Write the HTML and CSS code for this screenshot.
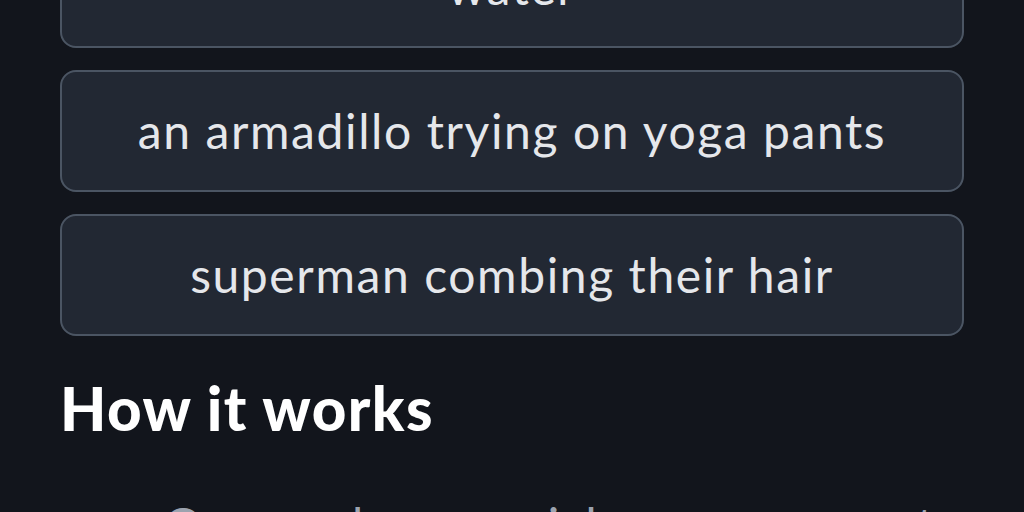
FILE: index.html
```html
<!DOCTYPE html>
<html lang="en">
<head>
<meta charset="utf-8">
<title>Prompts</title>
<link rel="stylesheet" href="styles.css">
</head>
<body>
<main class="page">
  <div class="prompts">
    <button class="prompt">a dolphin jumping out of the<br>water</button>
    <button class="prompt">an armadillo trying on yoga pants</button>
    <button class="prompt">superman combing their hair</button>
  </div>
  <h2 class="heading">How it works</h2>
  <ol class="steps">
    <li>Once a day, we pick a new prompt for everyone to draw.</li>
  </ol>
</main>
</body>
</html>
```

FILE: styles.css
```css
html, body {
  margin: 0;
  padding: 0;
  background: #12151c;
  overflow: hidden;
}

.page {
  padding: 0 60px;
  font-family: "Lato", "Noto Sans", sans-serif;
}

.prompts {
  display: flex;
  flex-direction: column;
  gap: 22px;
  margin-top: -140px;
}

.prompt {
  display: block;
  width: 100%;
  box-sizing: border-box;
  padding: 26px 20px;
  border: 2px solid #4b5563;
  border-radius: 16px;
  background: #222833;
  color: #e5e7eb;
  font-family: inherit;
  font-size: 48px;
  letter-spacing: 1.6px;
  line-height: 66px;
  text-align: center;
}

.heading {
  margin: 36px 0 0;
  color: #ffffff;
  font-size: 60px;
  font-weight: 900;
  letter-spacing: 1.4px;
  line-height: 72px;
}

.steps {
  margin: 48px 0 0;
  padding-left: 104px;
  color: #9ca3af;
  font-size: 48px;
  letter-spacing: 1.6px;
  line-height: 66px;
  list-style: none;
}
```
